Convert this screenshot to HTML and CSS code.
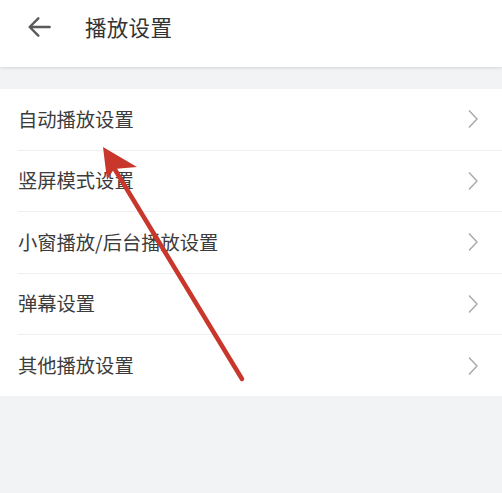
FILE: index.html
```html
<!DOCTYPE html>
<html lang="zh-CN">
<head>
<meta charset="utf-8">
<link rel="stylesheet" href="styles.css">
</head>
<body>
<div class="page">
  <header class="header">
    <svg class="back" viewBox="0 0 24 24" width="32" height="32"><path d="M20 12H5M11.5 5.5L5 12l6.5 6.5" fill="none" stroke="#5a5a5a" stroke-width="1.8" stroke-linecap="round" stroke-linejoin="round"/></svg>
    <div class="title">播放设置</div>
  </header>
  <div class="gap"></div>
  <ul class="list">
    <li class="row"><span class="label">自动播放设置</span><svg class="chev" viewBox="0 0 10 20" width="10" height="20"><path d="M1 1.5L9 10L1 18.5" fill="none" stroke="#a8a8a8" stroke-width="1.4"/></svg></li>
    <li class="row"><span class="label">竖屏模式设置</span><svg class="chev" viewBox="0 0 10 20" width="10" height="20"><path d="M1 1.5L9 10L1 18.5" fill="none" stroke="#a8a8a8" stroke-width="1.4"/></svg></li>
    <li class="row"><span class="label">小窗播放/后台播放设置</span><svg class="chev" viewBox="0 0 10 20" width="10" height="20"><path d="M1 1.5L9 10L1 18.5" fill="none" stroke="#a8a8a8" stroke-width="1.4"/></svg></li>
    <li class="row"><span class="label">弹幕设置</span><svg class="chev" viewBox="0 0 10 20" width="10" height="20"><path d="M1 1.5L9 10L1 18.5" fill="none" stroke="#a8a8a8" stroke-width="1.4"/></svg></li>
    <li class="row last"><span class="label">其他播放设置</span><svg class="chev" viewBox="0 0 10 20" width="10" height="20"><path d="M1 1.5L9 10L1 18.5" fill="none" stroke="#a8a8a8" stroke-width="1.4"/></svg></li>
  </ul>
  <div class="footer"></div>
  <svg class="annot" viewBox="0 0 502 493" width="502" height="493">
    <line x1="114" y1="168" x2="242" y2="379" stroke="#c9372c" stroke-width="4.5" stroke-linecap="round"/>
    <polygon points="103,147 137,167 114,169 107,180" fill="#c9372c"/>
  </svg>
</div>
</body>
</html>
```

FILE: styles.css
```css
html, body {
  margin: 0;
  padding: 0;
  background: #ffffff;
}
.page {
  position: relative;
  width: 502px;
  height: 493px;
  overflow: hidden;
  font-family: "Noto Sans CJK SC", "Noto Sans", sans-serif;
  background: #f2f3f5;
}
.header {
  height: 67px;
  background: #ffffff;
  display: flex;
  align-items: center;
  padding-left: 23px;
  box-sizing: border-box;
  box-shadow: 0 1px 3px rgba(0,0,0,0.12);
  position: relative;
  z-index: 1;
  padding-bottom: 14px;
}
.back {
  display: block;
  margin-right: 30px;
}
.title {
  font-size: 21.5px;
  color: #333333;
  letter-spacing: 0.3px;
}
.gap {
  height: 22px;
}
.list {
  list-style: none;
  margin: 0;
  padding: 0 0 0 18px;
  background: #ffffff;
}
.row {
  height: 61.5px;
  display: flex;
  align-items: center;
  justify-content: space-between;
  padding-right: 24px;
  border-bottom: 1px solid #efefef;
  box-sizing: border-box;
}
.row.last {
  border-bottom: none;
  height: 61px;
}
.label {
  font-size: 19.3px;
  color: #3c3c3c;
  padding-bottom: 1px;
}
.chev {
  display: block;
}
.footer {
  height: 98px;
}
.annot {
  position: absolute;
  left: 0;
  top: 0;
  pointer-events: none;
}
```
